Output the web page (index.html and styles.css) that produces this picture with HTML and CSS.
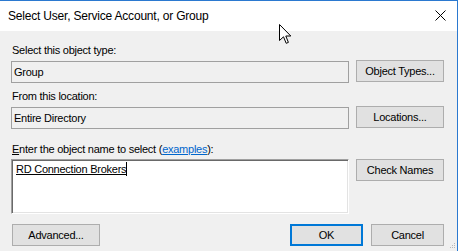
FILE: index.html
```html
<!DOCTYPE html>
<html lang="en">
<head>
  <meta charset="UTF-8">
  <title>Select User, Service Account, or Group</title>
  <link rel="stylesheet" href="styles.css">
</head>
<body>
  <div class="dialog">
    <div class="titlebar">
      <span class="title">Select User, Service Account, or Group</span>
      <svg class="close" width="11" height="11" viewBox="0 0 11 11" aria-label="Close">
        <path d="M0.5 0.5 L10.5 10.5 M10.5 0.5 L0.5 10.5" stroke="#000" stroke-width="1" fill="none"/>
      </svg>
    </div>

    <div class="content">
      <div class="label label-first">Select this object type:</div>
      <div class="row">
        <div class="field">Group</div>
        <button class="btn">Object Types...</button>
      </div>

      <div class="label label-second">From this location:</div>
      <div class="row">
        <div class="field">Entire Directory</div>
        <button class="btn">Locations...</button>
      </div>

      <div class="label label-third"><u>E</u>nter the object name to select (<a href="#" class="link">examples</a>):</div>
      <div class="row row-names">
        <div class="names"><span class="resolved">RD Connection Brokers</span><span class="caret"></span></div>
        <button class="btn">Check Names</button>
      </div>

      <div class="footer">
        <button class="btn btn-advanced">Advanced...</button>
        <div class="actions">
          <button class="btn btn-small btn-default">OK</button>
          <button class="btn btn-small">Cancel</button>
        </div>
      </div>
    </div>

    <!-- resize grip -->
    <svg class="grip" width="7" height="7" viewBox="0 0 7 7">
      <rect x="5" y="0" width="1" height="1" fill="#b8b8b8"/>
      <rect x="3" y="2" width="1" height="1" fill="#b8b8b8"/>
      <rect x="5" y="2" width="1" height="1" fill="#b8b8b8"/>
      <rect x="1" y="4" width="1" height="1" fill="#b8b8b8"/>
      <rect x="3" y="4" width="1" height="1" fill="#b8b8b8"/>
      <rect x="5" y="4" width="1" height="1" fill="#b8b8b8"/>
    </svg>

    <!-- mouse pointer -->
    <svg class="pointer" width="13" height="21" viewBox="0 0 13 21">
      <path d="M0.5 0.5 L0.5 16.5 L4.5 12.8 L7.2 19.3 L9.4 18.4 L6.8 12 L11.8 12 Z" fill="#fff" stroke="#000" stroke-width="1" stroke-linejoin="miter"/>
    </svg>
  </div>
</body>
</html>
```

FILE: styles.css
```css
html, body {
  margin: 0;
  padding: 0;
  background: #fff;
}
.dialog {
  position: relative;
  width: 457px;
  height: 250px;
  border-top: 1px solid #2b79d0;
  border-right: 1px solid #2b79d0;
  background: #f0f0f0;
  font-family: "Liberation Sans", Arial, sans-serif;
  font-size: 11px;
  letter-spacing: -0.25px;
  color: #000;
  overflow: hidden;
}
.titlebar {
  display: flex;
  justify-content: space-between;
  align-items: flex-start;
  height: 30px;
  background: #fff;
}
.title {
  font-size: 12px;
  line-height: 14px;
  letter-spacing: -0.2px;
  padding: 8px 0 0 8px;
}
.close {
  margin: 9px 11px 0 0;
}
.content {
  padding: 0 13px 0 11px;
}
.label {
  line-height: 13px;
  padding-left: 1px;
}
.label-first { margin-top: 13px; }
.label-second { margin-top: 7px; }
.label-third { margin-top: 14px; }
.link {
  color: #0066cc;
}
.row {
  display: flex;
  align-items: flex-start;
  gap: 7px;
  margin-top: 3px;
}
.field {
  flex: 1;
  height: 20px;
  line-height: 20px;
  border: 1px solid #a0a0a0;
  padding-left: 2px;
  margin-top: 1px;
}
.btn {
  width: 88px;
  height: 22px;
  padding: 0;
  margin: 0;
  border: 1px solid #adadad;
  background: #e1e1e1;
  font-family: "Liberation Sans", Arial, sans-serif;
  font-size: 11px;
  letter-spacing: -0.25px;
  color: #000;
}
.row-names {
  margin-top: 3px;
}
.names {
  flex: 1;
  height: 51px;
  padding: 2px 2px 0 3px;
  background: #fff;
  border: 1px solid;
  border-color: #a0a0a0 #fff #fff #a0a0a0;
  box-shadow: inset 1px 1px 0 #696969, inset -1px -1px 0 #e3e3e3;
  line-height: 14px;
  display: flex;
  align-items: flex-start;
}
.resolved {
  text-decoration: underline;
  padding-left: 1px;
}
.caret {
  width: 1px;
  height: 14px;
  background: #000;
}
.footer {
  display: flex;
  justify-content: space-between;
  margin-top: 10px;
  padding-left: 1px;
}
.actions {
  display: flex;
  gap: 8px;
}
.btn-small {
  width: 73px;
}
.btn-default {
  border: 2px solid #0078d7;
}
.grip {
  position: absolute;
  right: 1px;
  bottom: 1px;
}
.pointer {
  position: absolute;
  left: 279px;
  top: 23px;
}
```
